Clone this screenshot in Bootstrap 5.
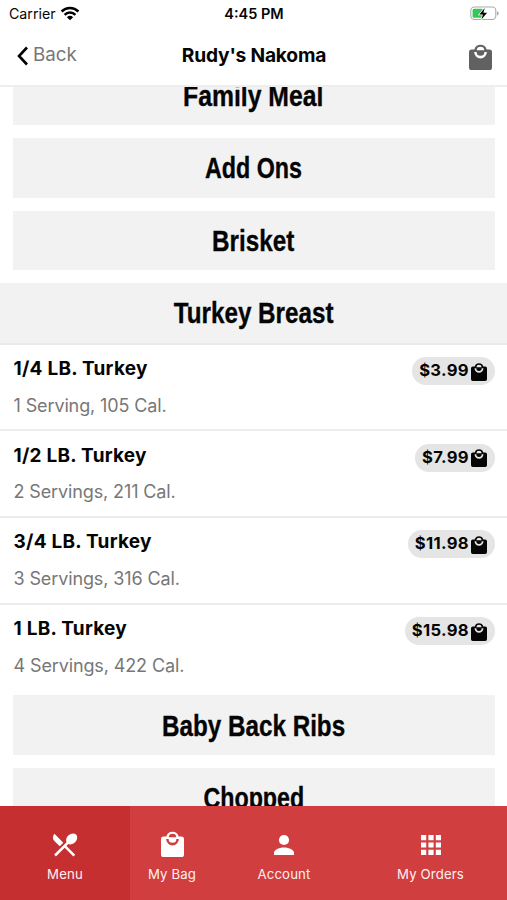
<!DOCTYPE html>
<html lang="en">
<head>
<meta charset="utf-8">
<meta name="viewport" content="width=device-width, initial-scale=1">
<title>Rudy's Nakoma</title>
<link rel="stylesheet" href="https://cdn.jsdelivr.net/npm/bootstrap@5.3.0/dist/css/bootstrap.min.css">
<style>
body{font-family:Inter,"Liberation Sans",sans-serif;color:#050505;line-height:1.2}
.screen{height:900px}
.status{height:28px;font-size:14.200px;padding:0 8px 0 9px}
.status>*,.topbar>*{flex:1 1 0}
.status .clock{font-weight:600;font-size:14.500px}
.wifi{margin-top:-2px}
.topbar{height:58.500px;padding:0 15px 0 16px;border-bottom:2px solid #eee}
.topbar h1{font-size:19.200px;font-weight:700;letter-spacing:-.2px;padding-bottom:2px;flex:0 0 auto;white-space:nowrap}
.back{font-size:18.800px;color:#777;padding-bottom:1px}
.bagbtn{color:#616161;padding-top:1px}
.cat{height:59.500px;background:#f2f2f2;margin:0 12.500px 13px;padding-top:2px;flex:none}
.cat span{font:700 29px/1 "Liberation Sans",sans-serif;transform:scaleX(.835);white-space:nowrap;color:#050505;-webkit-text-stroke:.35px #050505}
.cat .sx-wide{transform:scaleX(.853)}
.cat .sx-slim{transform:scaleX(.803)}
.cat.first{height:60px;margin-top:-21.500px}
.cat.open{margin:0;height:61.500px;border-bottom:2px solid #ebebeb}
.dish{height:86.700px;padding:12.500px 12.500px 0 13.500px;border-bottom:2px solid #ececec;flex:none}
.dish:last-child{border-bottom-color:transparent}
.dish h2{font-size:19px;font-weight:700;line-height:22px;margin:1px 0 14.500px;letter-spacing:.25px}
.dish p{font-size:18px;line-height:22px;color:#777;letter-spacing:-.12px}
.price{height:28px;border-radius:14px;background:#e5e5e5;font-size:16.600px;letter-spacing:.35px;font-weight:700;padding:0 7.500px 0 7px}
.price svg{margin-left:2px}
.tabs{height:94px;background:#d03e40;color:#fff}
.tabs a{color:#fff0ee;font-size:13.200px;letter-spacing:.15px;padding-top:24px}
.tabs a svg{margin-bottom:8.500px}
.tabs .t1{width:130px;background:#c62f30}.tabs .t2{width:84px}.tabs .t3{width:140px}.tabs .t4{width:153px}
</style>
<script src="https://cdn.jsdelivr.net/npm/bootstrap@5.3.0/dist/js/bootstrap.bundle.min.js"></script>
</head>
<body>
<svg class="d-none">
<symbol id="bag" viewBox="3 0 18 21" preserveAspectRatio="none"><path fill-rule="evenodd" d="M19 5h-2.200a5 5 0 0 0-9.600 0H5a2 2 0 0 0-2 2v12a2 2 0 0 0 2 2h14a2 2 0 0 0 2-2V7a2 2 0 0 0-2-2zM12 3a3 3 0 0 1 3 2.700H9A3 3 0 0 1 12 3zm0 9a5 5 0 0 1-5-5h2a3 3 0 0 0 6 0h2a5 5 0 0 1-5 5z" fill="currentColor"/></symbol>
</svg>
<div class="screen d-flex flex-column overflow-hidden bg-white">
  <div class="status d-flex align-items-center flex-shrink-0">
    <div class="d-flex align-items-center">Carrier
      <svg class="wifi ms-1" width="20" height="15" viewBox="0 0 20 15" fill="none" stroke="#000" stroke-width="2.5"><path d="M1.600 5.500a12 12 0 0 1 16.800 0M4.600 8.800a7.700 7.700 0 0 1 10.800 0"/><path d="M10 14.200 6.900 11.300a4.500 4.500 0 0 1 6.200 0z" fill="#000" stroke="none"/></svg>
    </div>
    <div class="clock text-center">4:45 PM</div>
    <div class="d-flex justify-content-end"><svg width="30" height="16" viewBox="0 0 30 16"><rect x="1.800" y="1" width="25" height="12.500" rx="3.600" fill="#fff" stroke="#aaa" stroke-width="1.100"/><rect x="3.600" y="2.800" width="10.500" height="9" rx="1.500" fill="#35c759"/><path d="M28 5.300v4.400q1.700-.6 1.700-2.200T28 5.300z" fill="#aaa"/><path d="M15.800 1.900 10.300 8.500h3.600l-1.500 5 5.700-6.800h-3.700z" fill="#000" stroke="#fff" stroke-width="1.400" paint-order="stroke"/></svg></div>
  </div>
  <header class="topbar d-flex align-items-center flex-shrink-0">
    <div class="back d-flex align-items-center"><svg width="13" height="20" viewBox="0 0 13 20" fill="none" stroke="#000" stroke-width="2.6"><path d="M11 1.500 3 10l8 8.500"/></svg><span class="ms-1">Back</span></div>
    <h1 class="mb-0">Rudy's Nakoma</h1>
    <div class="bagbtn text-end"><svg width="23" height="27"><use href="#bag"/></svg></div>
  </header>
  <main class="flex-grow-1 overflow-hidden d-flex flex-column">
    <div class="cat first d-flex align-items-center justify-content-center"><span class="sx-wide">Family Meal</span></div>
    <div class="cat d-flex align-items-center justify-content-center"><span class="sx-slim">Add Ons</span></div>
    <div class="cat d-flex align-items-center justify-content-center"><span>Brisket</span></div>
    <div class="cat open d-flex align-items-center justify-content-center"><span>Turkey Breast</span></div>
    <section>
      <div class="dish d-flex justify-content-between align-items-start"><div><h2>1/4 LB. Turkey</h2><p class="mb-0">1 Serving, 105 Cal.</p></div><div class="price d-flex align-items-center">$3.99<svg width="16" height="19"><use href="#bag"/></svg></div></div>
      <div class="dish d-flex justify-content-between align-items-start"><div><h2>1/2 LB. Turkey</h2><p class="mb-0">2 Servings, 211 Cal.</p></div><div class="price d-flex align-items-center">$7.99<svg width="16" height="19"><use href="#bag"/></svg></div></div>
      <div class="dish d-flex justify-content-between align-items-start"><div><h2>3/4 LB. Turkey</h2><p class="mb-0">3 Servings, 316 Cal.</p></div><div class="price d-flex align-items-center">$11.98<svg width="16" height="19"><use href="#bag"/></svg></div></div>
      <div class="dish d-flex justify-content-between align-items-start"><div><h2>1 LB. Turkey</h2><p class="mb-0">4 Servings, 422 Cal.</p></div><div class="price d-flex align-items-center">$15.98<svg width="16" height="19"><use href="#bag"/></svg></div></div>
    </section>
    <div class="cat mt-1 d-flex align-items-center justify-content-center"><span>Baby Back Ribs</span></div>
    <div class="cat d-flex align-items-center justify-content-center"><span class="sx-slim">Chopped</span></div>
  </main>
  <nav class="tabs d-flex flex-shrink-0">
    <a class="t1 d-flex flex-column align-items-center text-decoration-none" href="#"><svg width="26" height="28" viewBox="2 .5 20.500 22" fill="#fff"><path d="M8.100 13.340l2.830-2.830L3.910 3.500a4 4 0 0 0 0 5.660zM14.880 11.530c1.530.71 3.680.21 5.270-1.380 1.910-1.910 2.280-4.650.81-6.120-1.460-1.460-4.200-1.100-6.120.81-1.590 1.590-2.090 3.740-1.380 5.270L3.700 19.870l1.410 1.410L12 14.410l6.880 6.880 1.410-1.410L13.410 13z"/></svg>Menu</a>
    <a class="t2 d-flex flex-column align-items-center text-decoration-none" href="#"><svg width="29" height="28" viewBox="0 0 29 28" color="#fff"><use href="#bag" x="3" y="0" width="23" height="27"/></svg>My Bag</a>
    <a class="t3 d-flex flex-column align-items-center text-decoration-none" href="#"><svg width="20" height="28" viewBox="0 0 20 28" fill="#fff"><circle cx="10" cy="10" r="5.100"/><path d="M0 25v-2.500C0 19.200 6.600 17.400 10 17.400s10 1.800 10 5.100V25z"/></svg>Account</a>
    <a class="t4 d-flex flex-column align-items-center text-decoration-none" href="#"><svg width="20" height="28" viewBox="0 0 20 28" fill="#fff"><path d="M0 5h5.200v5.200H0zM7.400 5h5.200v5.200H7.400zM14.800 5H20v5.200h-5.200zM0 12.400h5.200v5.200H0zM7.400 12.400h5.200v5.200H7.400zM14.800 12.400H20v5.200h-5.200zM0 19.800h5.200V25H0zM7.400 19.800h5.200V25H7.400zM14.800 19.800H20V25h-5.200z"/></svg>My Orders</a>
  </nav>
</div>
</body>
</html>
